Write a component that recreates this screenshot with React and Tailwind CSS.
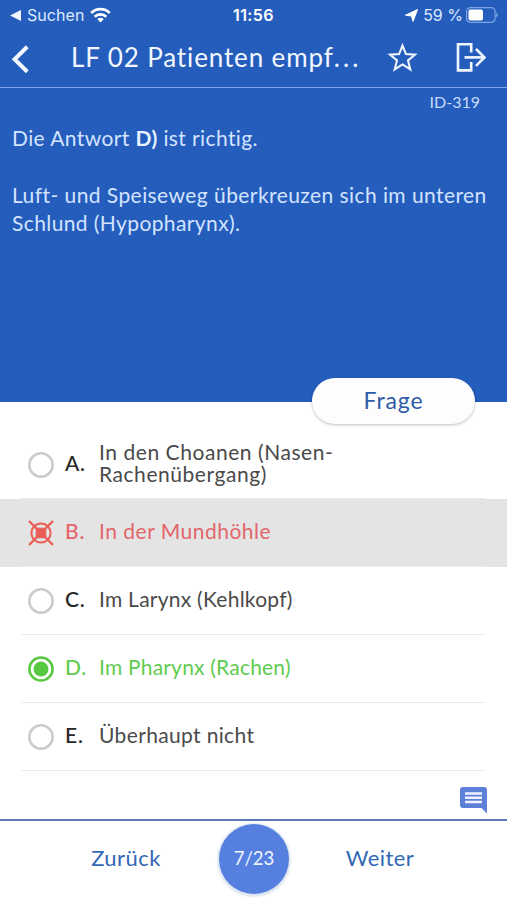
const ANSWERS = [
  { letter: 'A.', text: ['In den Choanen (Nasen-', 'Rachenübergang)'], spacing: 'tracking-[0.55px]' },
  { letter: 'B.', text: ['In der Mundhöhle'], spacing: 'tracking-[0.5px]', state: 'wrong' },
  { letter: 'C.', text: ['Im Larynx (Kehlkopf)'], spacing: 'tracking-[0.25px]' },
  { letter: 'D.', text: ['Im Pharynx (Rachen)'], spacing: 'tracking-[0.2px]', state: 'correct' },
  { letter: 'E.', text: ['Überhaupt nicht'], spacing: 'tracking-[0.35px]' },
];

function StatusBar() {
  return (
    <div className="h-[30px] grid grid-cols-3 items-center px-[10px] font-[Inter,sans-serif] text-[16px] text-[#dce9ff]">
      <div className="flex items-center">
        <svg width="11" height="11" viewBox="0 0 11 11" fill="#f2f7ff">
          <path d="M0 5.5 11 0v11z" />
        </svg>
        <span className="ml-[6px] tracking-[0.05px] whitespace-nowrap">Suchen</span>
        <svg className="ml-[6px] text-white" width="21" height="16" viewBox="0 0 21 16" fill="none" stroke="currentColor" strokeWidth="2.7">
          <path d="M1.2 6a13.2 13.2 0 0 1 18.6 0" />
          <path d="M4.7 9.7a8.2 8.2 0 0 1 11.6 0" />
          <path d="M7.3 12.2a4.5 4.5 0 0 1 6.4 0L10.5 15.4z" fill="currentColor" stroke="none" />
        </svg>
      </div>
      <span className="text-center font-semibold tracking-[0.4px] text-white">11:56</span>
      <div className="flex items-center justify-end -mr-[1px]">
        <svg className="text-white" width="13" height="13" viewBox="0 0 13 13" fill="currentColor" stroke="currentColor" strokeWidth="1.2" strokeLinejoin="round">
          <path d="M12.3.7 8 12.2 6.7 7 .7 6.2z" />
        </svg>
        <span className="ml-[5px] mr-[3px] whitespace-nowrap">59 %</span>
        <svg width="32" height="16" viewBox="0 0 32 16">
          <rect x="0.6" y="0.6" width="28.5" height="14.8" rx="4" fill="none" stroke="#7fa4e4" strokeWidth="1.2" />
          <rect x="2.5" y="2.5" width="14.5" height="11" rx="2" fill="#fff" />
          <path d="M30.2 5.5c2 .9 2 4.1 0 5z" fill="#7fa4e4" />
        </svg>
      </div>
    </div>
  );
}

function Header() {
  return (
    <header className="h-[58px] flex items-center border-b border-[#83a8ea] text-[#f2f7ff]">
      <svg className="ml-[10px] shrink-0" width="20" height="30" viewBox="0 0 20 30" fill="none" stroke="currentColor" strokeWidth="4">
        <path d="M17.3 2.8 4.6 15.3 17.3 27.8" />
      </svg>
      <h1 className="ml-[41px] -mt-1 w-[300px] text-[26px] leading-8 tracking-[0.87px] whitespace-nowrap">
        LF 02 Patienten empf<span className="tracking-[3.2px]">...</span>
      </h1>
      <svg className="ml-[16px] -mt-[3px] shrink-0" width="31" height="31" viewBox="0 0 30 30" fill="none" stroke="currentColor" strokeWidth="2">
        <path d="M15 3.4 18.3 11.7 27.1 12.3 20.3 17.9 22.6 26.5 15 21.7 7.4 26.5 9.7 17.9 2.9 12.3 11.7 11.7z" />
      </svg>
      <svg className="ml-[37px] -mt-[4px] shrink-0" width="32" height="32" viewBox="0 0 32 32" fill="none" stroke="currentColor" strokeWidth="2.6">
        <path d="M16.2 11.5V3.2H3v26.2h13.2v-8.3" />
        <path d="M9.5 16.4H29" />
        <path d="m21 8 8.4 8.4-8.4 8.4" />
      </svg>
    </header>
  );
}

function Radio({ state }) {
  if (state === 'wrong') {
    return (
      <svg width="26" height="26" viewBox="0 0 26 26" fill="none" stroke="#ea5e57">
        <circle cx="13" cy="13" r="9.6" strokeWidth="2" />
        <rect x="8.2" y="8.2" width="9.6" height="9.6" rx="1.5" fill="#ea5e57" />
        <path d="M1 1l24 24M25 1 1 25" strokeWidth="2.4" />
      </svg>
    );
  }
  if (state === 'correct') {
    return (
      <svg width="26" height="26" viewBox="0 0 26 26">
        <circle cx="13" cy="13" r="11.6" fill="none" stroke="#57c840" strokeWidth="2.5" />
        <circle cx="13" cy="13" r="7.5" fill="#57c840" />
      </svg>
    );
  }
  return (
    <svg width="26" height="26" viewBox="0 0 26 26">
      <circle cx="13" cy="13" r="11.7" fill="none" stroke="#cccccc" strokeWidth="2.6" />
    </svg>
  );
}

function Answer({ letter, text, spacing, state }) {
  const row = state === 'wrong' ? 'bg-[#e4e4e4]' : '';
  const color = state === 'wrong' ? 'text-[#e2666a]' : state === 'correct' ? 'text-[#60cb4e]' : 'text-[#4a4a4a]';
  const letterColor = state === 'wrong' ? 'text-[#e2666a]' : state === 'correct' ? 'text-[#60cb4e]' : 'text-[#262626]';

  return (
    <li className={`h-[68px] px-[21px] ${row}`}>
      <div className="h-full flex items-center border-b border-[#ebebeb] pl-[7px] pb-[2px]">
        <div className="mt-[2px]">
          <Radio state={state} />
        </div>
        <span className={`w-[35px] ml-[11px] -mt-[1px] text-[21px] font-medium tracking-[0.8px] ${letterColor}`}>{letter}</span>
        <span className={`-ml-[1px] -mt-[1px] text-[21px] leading-[22px] whitespace-nowrap ${spacing} ${color}`}>
          {text.map((line) => (
            <span key={line} className="block">{line}</span>
          ))}
        </span>
      </div>
    </li>
  );
}

export default function App() {
  return (
    <div className="w-[507px] h-[900px] flex flex-col overflow-hidden bg-white font-[Lato,sans-serif]">
      <div className="h-[402px] shrink-0 bg-[#255dbd] relative">
        <StatusBar />
        <Header />
        <p className="pt-[4px] pr-[27px] text-right text-[16px] leading-5 text-[#c8dcfb]">ID-319</p>
        <div className="pt-[12px] pl-[12px] text-[21px] leading-[28.4px] text-[#d3e4ff] whitespace-nowrap">
          <p className="tracking-[0.4px]">
            Die Antwort <b className="font-bold text-[#e8f2ff]">D)</b> ist richtig.
          </p>
          <p className="mt-[28.5px] tracking-[0.43px]">Luft- und Speiseweg überkreuzen sich im unteren</p>
          <p className="tracking-[0.4px]">Schlund (Hypopharynx).</p>
        </div>
        <button className="absolute left-[312px] top-[378px] w-[163px] h-[46px] rounded-full bg-[#fdfdfd] pb-[2px] text-[23px] tracking-[0.9px] text-[#2f5aa8] shadow-[0_1px_3px_rgba(0,0,0,0.25)]">
          Frage
        </button>
      </div>

      <ul className="pt-[29px]">
        {ANSWERS.map((answer) => (
          <Answer key={answer.letter} {...answer} />
        ))}
      </ul>

      <div className="flex-1 flex justify-end pt-[16px] pr-[20px]">
        <svg width="27" height="27" viewBox="0 0 27 27">
          <path d="M3 0h21a3 3 0 0 1 3 3v23.5L21.5 21H3a3 3 0 0 1-3-3V3a3 3 0 0 1 3-3z" fill="#5c7fd8" />
          <path d="M5 6.5h17M5 10.8h17M5 15h17" stroke="#eef3ff" strokeWidth="2.5" />
        </svg>
      </div>

      <footer className="h-[81px] shrink-0 flex items-center border-t-2 border-[#5a79b8] text-[22px] text-[#3368b5]">
        <button className="w-[219px] pl-[33px] -mt-[6px] tracking-[0.45px]">Zurück</button>
        <div className="size-[70px] -mt-[3px] shrink-0 rounded-full flex items-center justify-center bg-[#5580e0] text-[18.5px] text-[#f0f5ff] shadow-[0_1px_2px_2px_#dfe6f2]">
          7/23
        </div>
        <button className="w-[218px] pr-[36px] -mt-[6px] tracking-[0.45px]">Weiter</button>
      </footer>
    </div>
  );
}
